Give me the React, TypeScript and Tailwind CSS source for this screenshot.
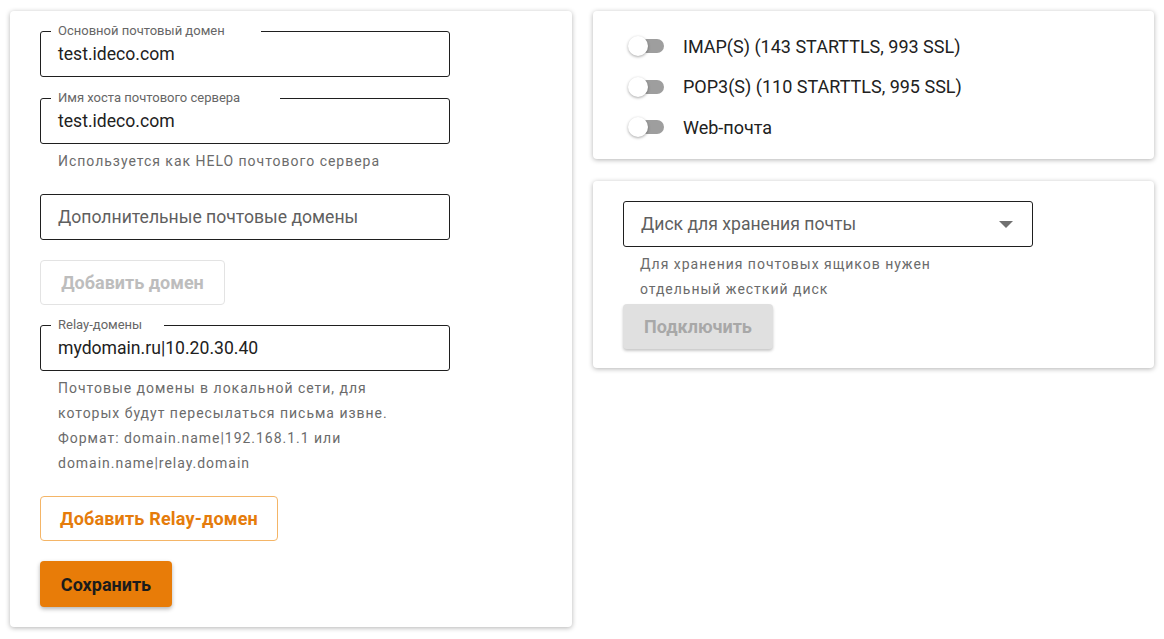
import React from "react";

const font = { fontFamily: "Roboto, 'Noto Sans', sans-serif" };

function OutlinedField({
  label,
  notch,
  value,
  placeholder,
}: {
  label?: string;
  notch?: string;
  value?: string;
  placeholder?: string;
}) {
  return (
    <div className="relative h-[46px] w-[410px] rounded-[3px] border border-[#1f1f1f] flex items-center pl-[17px] pt-[1px]">
      {label && (
        <span
          className={`absolute left-[10px] top-[-9px] h-[16px] bg-white pl-[7px] text-[13px] leading-[16px] text-[#666] ${notch}`}
        >
          {label}
        </span>
      )}
      {value ? (
        <span className="text-[17.6px] text-[#212121]">{value}</span>
      ) : (
        <span className="text-[17.6px] text-[#5f5f5f]">{placeholder}</span>
      )}
    </div>
  );
}

function Helper({ children }: { children: React.ReactNode }) {
  return (
    <p className="mt-[5px] max-w-[360px] pl-[18px] text-[14px] leading-[25px] text-[#6b6b6b] tracking-[0.07em]">
      {children}
    </p>
  );
}

function Toggle({ label }: { label: string }) {
  return (
    <div className="flex h-[40.5px] items-center">
      <div className="relative h-[20px] w-[37px] flex items-center">
        <div className="absolute left-[12px] h-[14px] w-[24px] rounded-full bg-[#9e9e9e]" />
        <div className="absolute left-0 h-[20px] w-[20px] rounded-full bg-white shadow-[0_1px_3px_rgba(0,0,0,0.35)]" />
      </div>
      <span className="ml-[18px] text-[18px] text-[#212121]">{label}</span>
    </div>
  );
}

export default function App() {
  return (
    <div style={font} className="min-h-[639px] w-[1164px] bg-white pl-[10px] pt-[11px] flex gap-[21px] items-start">
      {/* Left card */}
      <div className="w-[562px] rounded-[4px] bg-white shadow-[0_1px_5px_rgba(0,0,0,0.3)] pl-[30px] pt-[20px] pb-[20px]">
        <OutlinedField label="Основной почтовый домен" notch="w-[210px]" value="test.ideco.com" />
        <div className="h-[21px]" />
        <OutlinedField label="Имя хоста почтового сервера" notch="w-[229px]" value="test.ideco.com" />
        <Helper>Используется как HELO почтового сервера</Helper>
        <div className="h-[20px]" />
        <OutlinedField placeholder="Дополнительные почтовые домены" />
        <div className="h-[20px]" />
        <button className="h-[45px] w-[185px] rounded-[4px] border border-[#e3e3e3] text-[18px] font-bold text-[#bdbdbd]">
          Добавить домен
        </button>
        <div className="h-[20px]" />
        <OutlinedField label="Relay-домены" notch="w-[113px]" value="mydomain.ru|10.20.30.40" />
        <Helper>
          Почтовые домены в локальной сети, для которых будут пересылаться письма извне. Формат: domain.name|192.168.1.1 или domain.name|relay.domain
        </Helper>
        <div className="h-[20px]" />
        <button className="h-[45px] w-[238px] rounded-[4px] border border-[#f4b567] text-[18px] font-bold tracking-[0.01em] text-[#e57c0b]">
          Добавить Relay-домен
        </button>
        <div className="h-[20px]" />
        <button className="h-[46px] w-[132px] rounded-[4px] bg-[#e87c08] text-[18px] font-bold text-[#1b1b1b] shadow-[0_2px_4px_rgba(0,0,0,0.3)]">
          Сохранить
        </button>
      </div>

      {/* Right column */}
      <div className="w-[561px] flex flex-col gap-[22px]">
        <div className="rounded-[4px] bg-white shadow-[0_1px_5px_rgba(0,0,0,0.3)] pl-[35px] pt-[15px] pb-[12px] h-[148px]">
          <Toggle label="IMAP(S) (143 STARTTLS, 993 SSL)" />
          <Toggle label="POP3(S) (110 STARTTLS, 995 SSL)" />
          <Toggle label="Web-почта" />
        </div>

        <div className="rounded-[4px] bg-white shadow-[0_1px_5px_rgba(0,0,0,0.3)] pl-[30px] pt-[20px] pb-[19px]">
          <div className="relative h-[46px] w-[410px] rounded-[3px] border border-[#1f1f1f] flex items-center pl-[17px] pt-[1px]">
            <span className="text-[17.6px] text-[#5f5f5f]">Диск для хранения почты</span>
            <svg className="absolute right-[19px] top-[19px]" width="14" height="7" viewBox="0 0 14 7">
              <path d="M0 0 L14 0 L7 7 Z" fill="#707070" />
            </svg>
          </div>
          <p className="mt-[5px] max-w-[360px] pl-[17px] text-[14px] leading-[25px] text-[#6b6b6b] tracking-[0.07em]">
            Для хранения почтовых ящиков нужен отдельный жесткий диск
          </p>
          <button className="mt-[2px] h-[45px] w-[150px] rounded-[4px] bg-[#e0e0e0] text-[18px] font-bold text-[#a8a8a8] shadow-[0_2px_3px_rgba(0,0,0,0.22)]">
            Подключить
          </button>
        </div>
      </div>
    </div>
  );
}
